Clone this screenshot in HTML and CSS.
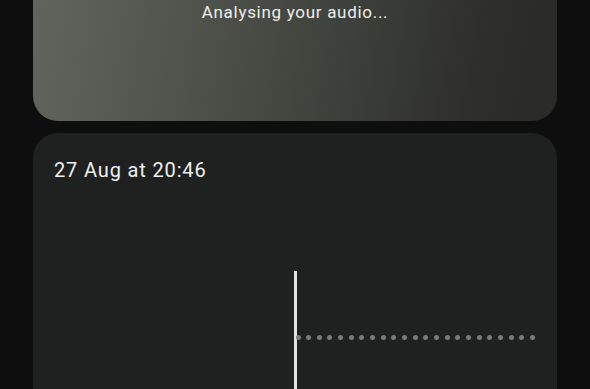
FILE: index.html
```html
<!DOCTYPE html>
<html lang="en">
<head>
<meta charset="utf-8">
<title>Analysing audio</title>
<link rel="stylesheet" href="styles.css">
</head>
<body>
<main class="page">
  <section class="status-card">
    <p class="status-text">Analysing your audio...</p>
  </section>
  <section class="recording-card">
    <h2 class="recording-date">27 Aug at 20:46</h2>
    <div class="chart">
      <div class="playhead"></div>
      <div class="dots">
        <span class="dot"></span><span class="dot"></span><span class="dot"></span><span class="dot"></span>
        <span class="dot"></span><span class="dot"></span><span class="dot"></span><span class="dot"></span>
        <span class="dot"></span><span class="dot"></span><span class="dot"></span><span class="dot"></span>
        <span class="dot"></span><span class="dot"></span><span class="dot"></span><span class="dot"></span>
        <span class="dot"></span><span class="dot"></span><span class="dot"></span><span class="dot"></span>
        <span class="dot"></span><span class="dot"></span><span class="dot"></span>
      </div>
    </div>
  </section>
</main>
</body>
</html>
```

FILE: styles.css
```css
html, body {
  margin: 0;
  padding: 0;
  height: 100%;
  overflow: hidden;
  background: #0e0e0e;
}

body {
  font-family: Roboto, "Open Sans", "Noto Sans", sans-serif;
  color: #ececec;
}

.page {
  display: flex;
  flex-direction: column;
  gap: 12px;
  padding: 0 33px;
}

.status-card {
  height: 121px;
  border-radius: 0 0 25px 25px;
  background: linear-gradient(100deg, #62655d 0%, #50534c 30%, #3d3f3a 60%, #2d2e2b 85%, #2a2b28 100%);
  display: flex;
  justify-content: center;
}

.status-text {
  margin: 0;
  padding-top: 1px;
  font-size: 17px;
  line-height: 22px;
  letter-spacing: 0.7px;
  color: #eeeeea;
}

.recording-card {
  height: 320px;
  border-radius: 25px;
  background: #1f2020;
  padding: 25px 21px 0;
  box-sizing: border-box;
}

.recording-date {
  margin: 0;
  font-size: 20px;
  font-weight: 400;
  line-height: 24px;
  letter-spacing: 0.85px;
  color: #f0f0f0;
}

.chart {
  display: flex;
  align-items: flex-start;
  margin-top: 89px;
  padding-left: 240px;
}

.playhead {
  width: 2.5px;
  height: 200px;
  background: #e2e2e2;
  flex: none;
}

.dots {
  display: flex;
  gap: 5.67px;
  margin-top: 64px;
  margin-left: -1px;
}

.dot {
  width: 5px;
  height: 5px;
  border-radius: 50%;
  background: #7b7b7b;
  flex: none;
}
```
